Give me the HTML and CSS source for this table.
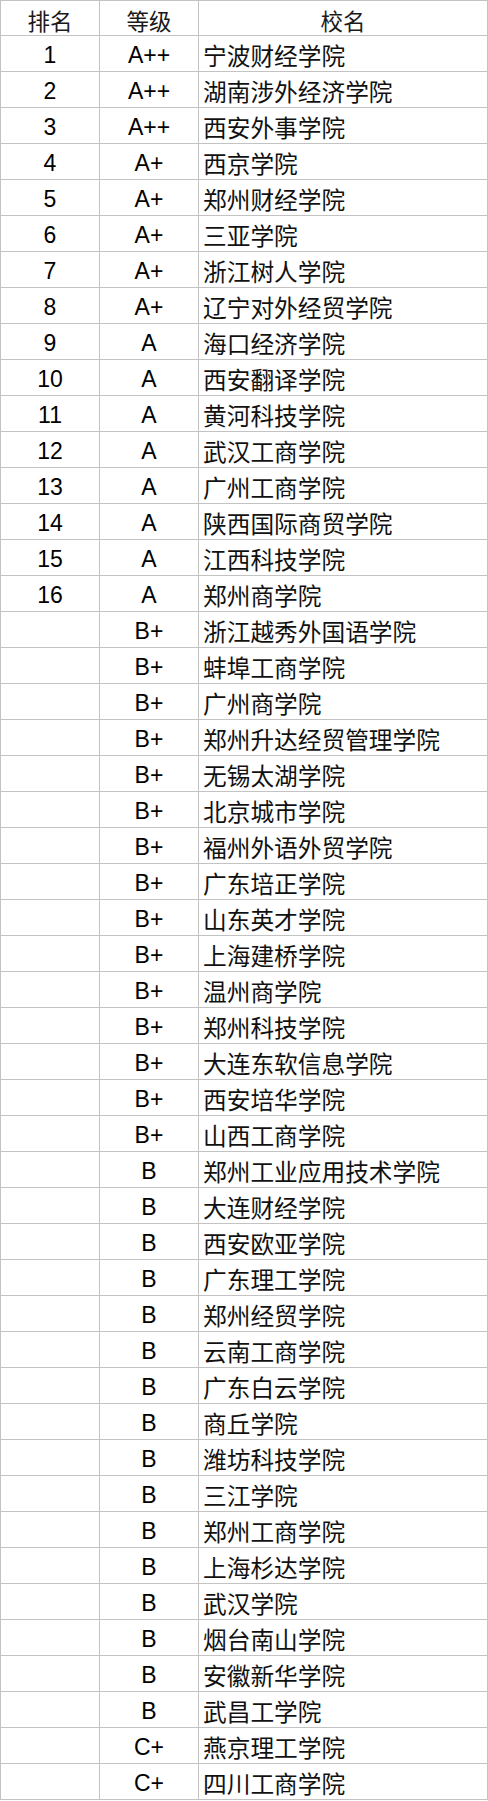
FILE: index.html
```html
<!DOCTYPE html>
<html lang="zh-CN">
<head>
<meta charset="utf-8">
<title>排名</title>
<link rel="stylesheet" href="styles.css">
</head>
<body>
<table class="rank">
<colgroup><col class="c1"><col class="c2"><col class="c3"></colgroup>
<thead>
<tr class="head"><th>排名</th><th>等级</th><th>校名</th></tr>
</thead>
<tbody>
<tr><td class="num">1</td><td class="lvl">A++</td><td class="name">宁波财经学院</td></tr>
<tr><td class="num">2</td><td class="lvl">A++</td><td class="name">湖南涉外经济学院</td></tr>
<tr><td class="num">3</td><td class="lvl">A++</td><td class="name">西安外事学院</td></tr>
<tr><td class="num">4</td><td class="lvl">A+</td><td class="name">西京学院</td></tr>
<tr><td class="num">5</td><td class="lvl">A+</td><td class="name">郑州财经学院</td></tr>
<tr><td class="num">6</td><td class="lvl">A+</td><td class="name">三亚学院</td></tr>
<tr><td class="num">7</td><td class="lvl">A+</td><td class="name">浙江树人学院</td></tr>
<tr><td class="num">8</td><td class="lvl">A+</td><td class="name">辽宁对外经贸学院</td></tr>
<tr><td class="num">9</td><td class="lvl">A</td><td class="name">海口经济学院</td></tr>
<tr><td class="num">10</td><td class="lvl">A</td><td class="name">西安翻译学院</td></tr>
<tr><td class="num">11</td><td class="lvl">A</td><td class="name">黄河科技学院</td></tr>
<tr><td class="num">12</td><td class="lvl">A</td><td class="name">武汉工商学院</td></tr>
<tr><td class="num">13</td><td class="lvl">A</td><td class="name">广州工商学院</td></tr>
<tr><td class="num">14</td><td class="lvl">A</td><td class="name">陕西国际商贸学院</td></tr>
<tr><td class="num">15</td><td class="lvl">A</td><td class="name">江西科技学院</td></tr>
<tr><td class="num">16</td><td class="lvl">A</td><td class="name">郑州商学院</td></tr>
<tr><td class="num"></td><td class="lvl">B+</td><td class="name">浙江越秀外国语学院</td></tr>
<tr><td class="num"></td><td class="lvl">B+</td><td class="name">蚌埠工商学院</td></tr>
<tr><td class="num"></td><td class="lvl">B+</td><td class="name">广州商学院</td></tr>
<tr><td class="num"></td><td class="lvl">B+</td><td class="name">郑州升达经贸管理学院</td></tr>
<tr><td class="num"></td><td class="lvl">B+</td><td class="name">无锡太湖学院</td></tr>
<tr><td class="num"></td><td class="lvl">B+</td><td class="name">北京城市学院</td></tr>
<tr><td class="num"></td><td class="lvl">B+</td><td class="name">福州外语外贸学院</td></tr>
<tr><td class="num"></td><td class="lvl">B+</td><td class="name">广东培正学院</td></tr>
<tr><td class="num"></td><td class="lvl">B+</td><td class="name">山东英才学院</td></tr>
<tr><td class="num"></td><td class="lvl">B+</td><td class="name">上海建桥学院</td></tr>
<tr><td class="num"></td><td class="lvl">B+</td><td class="name">温州商学院</td></tr>
<tr><td class="num"></td><td class="lvl">B+</td><td class="name">郑州科技学院</td></tr>
<tr><td class="num"></td><td class="lvl">B+</td><td class="name">大连东软信息学院</td></tr>
<tr><td class="num"></td><td class="lvl">B+</td><td class="name">西安培华学院</td></tr>
<tr><td class="num"></td><td class="lvl">B+</td><td class="name">山西工商学院</td></tr>
<tr><td class="num"></td><td class="lvl">B</td><td class="name">郑州工业应用技术学院</td></tr>
<tr><td class="num"></td><td class="lvl">B</td><td class="name">大连财经学院</td></tr>
<tr><td class="num"></td><td class="lvl">B</td><td class="name">西安欧亚学院</td></tr>
<tr><td class="num"></td><td class="lvl">B</td><td class="name">广东理工学院</td></tr>
<tr><td class="num"></td><td class="lvl">B</td><td class="name">郑州经贸学院</td></tr>
<tr><td class="num"></td><td class="lvl">B</td><td class="name">云南工商学院</td></tr>
<tr><td class="num"></td><td class="lvl">B</td><td class="name">广东白云学院</td></tr>
<tr><td class="num"></td><td class="lvl">B</td><td class="name">商丘学院</td></tr>
<tr><td class="num"></td><td class="lvl">B</td><td class="name">潍坊科技学院</td></tr>
<tr><td class="num"></td><td class="lvl">B</td><td class="name">三江学院</td></tr>
<tr><td class="num"></td><td class="lvl">B</td><td class="name">郑州工商学院</td></tr>
<tr><td class="num"></td><td class="lvl">B</td><td class="name">上海杉达学院</td></tr>
<tr><td class="num"></td><td class="lvl">B</td><td class="name">武汉学院</td></tr>
<tr><td class="num"></td><td class="lvl">B</td><td class="name">烟台南山学院</td></tr>
<tr><td class="num"></td><td class="lvl">B</td><td class="name">安徽新华学院</td></tr>
<tr><td class="num"></td><td class="lvl">B</td><td class="name">武昌工学院</td></tr>
<tr><td class="num"></td><td class="lvl">C+</td><td class="name">燕京理工学院</td></tr>
<tr><td class="num"></td><td class="lvl">C+</td><td class="name">四川工商学院</td></tr>
</tbody>
</table>
</body>
</html>
```

FILE: styles.css
```css
html, body {
  margin: 0;
  padding: 0;
  background: #ffffff;
}

.rank {
  width: 488px;
  border-collapse: collapse;
  table-layout: fixed;
  font-family: "Liberation Sans", "Noto Sans CJK SC", sans-serif;
  color: #000000;
}

.c1 { width: 99px; }
.c2 { width: 99px; }

.rank th,
.rank td {
  border: 1px solid #c3c3c3;
  padding: 4px 0 0 0;
  height: 31px;
  line-height: 31px;
  white-space: nowrap;
  overflow: hidden;
}

.rank th {
  height: 30px;
  line-height: 30px;
  font-weight: normal;
  font-size: 22.5px;
  text-align: center;
  font-family: "Noto Sans CJK SC", sans-serif;
  color: #1a1a1a;
}

.num,
.lvl {
  text-align: center;
  font-size: 23px;
}

.name {
  text-align: left;
  padding-left: 4px !important;
  font-size: 23.7px;
  font-family: "Noto Sans CJK SC", sans-serif;
  color: #111111;
}
```
